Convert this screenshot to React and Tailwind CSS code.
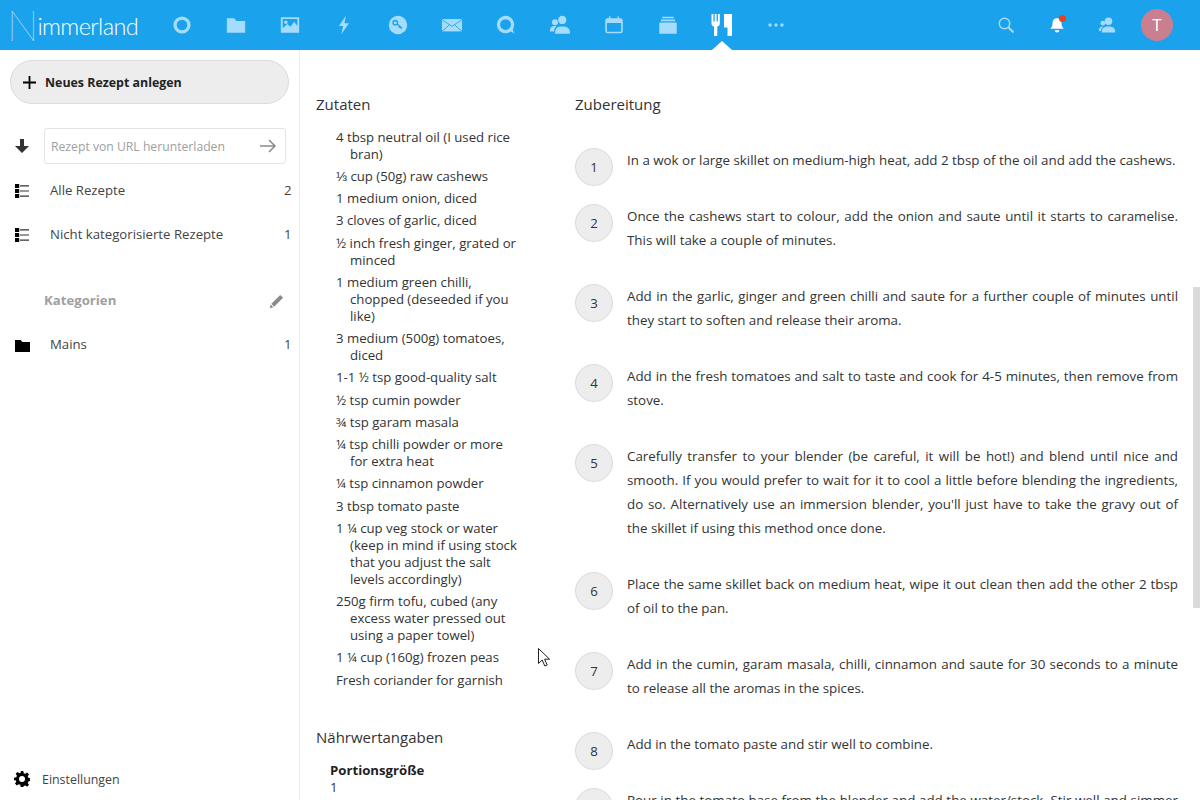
import React from 'react';

const ingredients = [
  '4 tbsp neutral oil (I used rice bran)',
  '⅓ cup (50g) raw cashews',
  '1 medium onion, diced',
  '3 cloves of garlic, diced',
  '½ inch fresh ginger, grated or minced',
  '1 medium green chilli, chopped (deseeded if you like)',
  '3 medium (500g) tomatoes, diced',
  '1-1 ½ tsp good-quality salt',
  '½ tsp cumin powder',
  '¾ tsp garam masala',
  '¼ tsp chilli powder or more for extra heat',
  '¼ tsp cinnamon powder',
  '3 tbsp tomato paste',
  '1 ¼ cup veg stock or water (keep in mind if using stock that you adjust the salt levels accordingly)',
  '250g firm tofu, cubed (any excess water pressed out using a paper towel)',
  '1 ¼ cup (160g) frozen peas',
  'Fresh coriander for garnish',
];

const steps = [
  'In a wok or large skillet on medium-high heat, add 2 tbsp of the oil and add the cashews.',
  'Once the cashews start to colour, add the onion and saute until it starts to caramelise. This will take a couple of minutes.',
  'Add in the garlic, ginger and green chilli and saute for a further couple of minutes until they start to soften and release their aroma.',
  'Add in the fresh tomatoes and salt to taste and cook for 4-5 minutes, then remove from stove.',
  "Carefully transfer to your blender (be careful, it will be hot!) and blend until nice and smooth. If you would prefer to wait for it to cool a little before blending the ingredients, do so. Alternatively use an immersion blender, you'll just have to take the gravy out of the skillet if using this method once done.",
  'Place the same skillet back on medium heat, wipe it out clean then add the other 2 tbsp of oil to the pan.',
  'Add in the cumin, garam masala, chilli, cinnamon and saute for 30 seconds to a minute to release all the aromas in the spices.',
  'Add in the tomato paste and stir well to combine.',
  'Pour in the tomato base from the blender and add the water/stock. Stir well and simmer for a few minutes.',
];

const Svg = ({ children, size = 20, className = '' }) => (
  <svg width={size} height={size} viewBox="0 0 24 24" fill="currentColor" className={className}>
    {children}
  </svg>
);

const navIcons = [
  <Svg key="files" size={22}><circle cx="12" cy="12" r="7.6" fill="none" stroke="currentColor" strokeWidth="3.6" /></Svg>,
  <Svg key="folder" size={22}><path d="M2 4.5h8l2.5 3H22v13H2z" /></Svg>,
  <Svg key="image" size={22}><path fillRule="evenodd" d="M2 3.5h20v17H2zM4 5.5v10l5-4.500 3.500 3 4-5.500 3.500 4.500V5.500zM7.500 7a2 2 0 1 1 0 4 2 2 0 0 1 0-4z" /></Svg>,
  <Svg key="bolt" size={22}><path d="M14 2 6.500 13h4.500L9 22l8.500-12H12.500z" /></Svg>,
  <Svg key="passwords" size={22}>
    <circle cx="12" cy="12" r="10" />
    <circle cx="9" cy="9.500" r="2.400" fill="none" stroke="#1aa2ec" strokeWidth="1.500" />
    <path d="m11 11 5.500 4.500m-2.500-2 -1 1.500m3-.2-1 1.200" fill="none" stroke="#1aa2ec" strokeWidth="1.500" />
  </Svg>,
  <Svg key="mail" size={22}>
    <path d="M1 5.500h22v13.500H1z" />
    <path d="m1 6 11 7.500L23 6M1 19l8.500-7.500M23 19l-8.500-7.500" fill="none" stroke="#1aa2ec" strokeWidth="0.900" />
  </Svg>,
  <Svg key="talk" size={22}>
    <circle cx="11.500" cy="11.500" r="7.700" fill="none" stroke="currentColor" strokeWidth="3.600" />
    <path d="m16 18 5 3.500-2-6z" />
  </Svg>,
  <Svg key="contacts" size={22}>
    <circle cx="14.500" cy="6.500" r="4.500" />
    <path d="M6.500 21.500c0-6.500 2.500-8 8-8s8.500 1.500 8.500 8z" />
    <circle cx="6.500" cy="9" r="3.300" />
    <path d="M1 19c0-4.500 2-6 5.500-6 .8 0 1.500 0 2 .3-2 1-3 2.800-3 5.700z" />
  </Svg>,
  <Svg key="calendar" size={20}>
    <path fillRule="evenodd" d="M4 4H6V1.500h1.600V4h8.800V1.500H18V4h2a2.500 2.500 0 0 1 2.500 2.500v13A2.500 2.500 0 0 1 20 22H4a2.500 2.500 0 0 1-2.500-2.500v-13A2.500 2.500 0 0 1 4 4zM3.500 9.500v10c0 .3.200.5.500.5h16c.3 0 .5-.2.500-.5v-10z" />
  </Svg>,
  <Svg key="deck" size={20}>
    <path d="M5 2h14v2H5zM3.500 5.500h17v2h-17zM2.500 9h19a1 1 0 0 1 1 1v11.500a1 1 0 0 1-1 1h-19a1 1 0 0 1-1-1V10a1 1 0 0 1 1-1z" />
  </Svg>,
  <Svg key="cookbook" size={24} className="text-white">
    <path d="M1.500 1h1.900v7.500h1.300V1h1.900v7.500h1.300V1h1.900v9.500c0 1.600-1 2.700-2.500 3V23H4v-9.500c-1.500-.3-2.500-1.400-2.500-3zM14 1h8v22h-4.500v-8.500H14z" />
  </Svg>,
  <Svg key="more" size={22}><circle cx="5.500" cy="12" r="1.800" /><circle cx="12" cy="12" r="1.800" /><circle cx="18.500" cy="12" r="1.800" /></Svg>,
];

const ListIcon = () => (
  <svg width="16" height="16" viewBox="0 0 16 16" fill="black">
    <path d="M1 1h4.200v4H1zM1 6h4.200v4H1zM1 11h4.200v4H1z" />
    <path d="M6 2.200h9v1.200H6zM6 7.400h9v1.200H6zM6 12.600h9v1.200H6z" fill="#333" />
  </svg>
);

const NavRow = ({ icon, label, count }) => (
  <div className="flex h-[44px] items-center">
    <div className="flex w-[44px] justify-center">{icon}</div>
    <span className="ml-[6px] flex-1 text-[#444]">{label}</span>
    <span className="w-[14px] text-[#444]">{count}</span>
  </div>
);

export default function App() {
  return (
    <div className="flex h-screen flex-col overflow-hidden bg-white font-['Open_Sans',sans-serif] text-[13.2px] text-[#333]">
      <header className="flex h-[50px] shrink-0 items-center bg-[#1aa2ec] text-[#a6dcfb]">
        <div className="flex w-[155px] items-end pl-[7px] text-white">
          <span className="font-['Lato',sans-serif] text-[42px] leading-[46px] font-thin">N</span>
          <span className="-ml-[1px] mb-[8px] font-['Lato',sans-serif] text-[23.500px] leading-[28px] font-light tracking-[-0.6px]">immerland</span>
        </div>
        {navIcons.map((icon, index) => (
          <div key={index} className="relative flex h-[50px] w-[54px] items-center justify-center">
            {icon}
            {index === 10 && (
              <div className="absolute bottom-0 left-[17px] h-0 w-0 border-x-[10px] border-b-[9px] border-x-transparent border-b-white" />
            )}
          </div>
        ))}
        <div className="ml-auto flex items-center pr-[18px]">
          <div className="flex w-[50px] justify-center pr-[2px]">
            <Svg size={18}><circle cx="10" cy="10" r="7" fill="none" stroke="currentColor" strokeWidth="1.800" /><path d="m15 15 7 7" stroke="currentColor" strokeWidth="2.500" /></Svg>
          </div>
          <div className="relative flex w-[50px] justify-center text-white">
            <Svg size={18}><path d="M12 3c4 0 6 3 6 7 0 3 1 5 3 7H3c2-2 3-4 3-7 0-4 2-7 6-7zM9 19h6a3 3 0 0 1-6 0z" /></Svg>
            <div className="absolute top-[-1px] left-[27px] h-[7px] w-[7px] rounded-full bg-[#e9421e]" />
          </div>
          <div className="flex w-[50px] justify-center">
            <Svg size={18}><circle cx="14" cy="7" r="5" /><path d="M5 22c0-6 3-8 9-8s9 2 9 8z" /><circle cx="6.500" cy="9.500" r="3.200" /><path d="M1 20c0-4 2-6 6-6-1 1-3 3-3 6z" /></Svg>
          </div>
          <div className="flex w-[50px] justify-center">
            <div className="flex h-[32px] w-[32px] items-center justify-center rounded-full bg-[#c97f90] text-[17px] text-white">T</div>
          </div>
        </div>
      </header>

      <div className="relative flex min-h-0 flex-1">
        <aside className="flex w-[300px] shrink-0 flex-col border-r border-[#ededed] pr-[1px]">
          <div className="pt-[10px] pr-[9px] pl-[10px]">
            <button className="flex h-[44px] w-full items-center rounded-full border border-[#dbdbdb] bg-[#ededed] pl-[12px] font-bold text-[#222]">
              <svg width="13" height="13" viewBox="0 0 13 13" fill="black"><path d="M5.600 0h1.800v5.600H13v1.800H7.400V13H5.600V7.400H0V5.600h5.600z" /></svg>
              <span className="ml-[9px] pt-[3px] text-[12.400px]">Neues Rezept anlegen</span>
            </button>
          </div>
          <div className="mt-[24px] flex h-[36px] items-center">
            <div className="flex w-[44px] justify-center">
              <svg width="14" height="14" viewBox="0 0 14 14" fill="#333"><path d="M5 0h4v7h5l-7 7-7-7h5z" /></svg>
            </div>
            <div className="flex h-[36px] w-[242px] items-center justify-between rounded-[3px] border border-[#e3e3e3] pr-[8px] pl-[6px] text-[#a0a0a0]">
              <span className="pt-[3px] text-[12.200px]">Rezept von URL herunterladen</span>
              <svg width="18" height="16" viewBox="0 0 18 16" fill="none" stroke="#8c8c8c" strokeWidth="1.500"><path d="M1 8h15M10 2l6 6-6 6" /></svg>
            </div>
          </div>
          <div className="mt-[5px]">
            <NavRow icon={<ListIcon />} label="Alle Rezepte" count="2" />
            <NavRow icon={<ListIcon />} label="Nicht kategorisierte Rezepte" count="1" />
          </div>
          <div className="mt-[22px] flex h-[44px] items-center justify-between pr-[14px] pl-[44px]">
            <span className="font-bold text-[#a0a0a0]">Kategorien</span>
            <svg width="15" height="15" viewBox="0 0 16 16" fill="#8a8a8a"><path d="M12 1l3 3-9.500 9.500-3-3zM1.800 11.300l2.900 2.900L.8 15.200z" /></svg>
          </div>
          <NavRow
            icon={<svg width="15" height="15" viewBox="0 0 15 15" fill="black"><path d="M0 2h5.500l2 2H15v10H0z" /></svg>}
            label="Mains"
            count="1"
          />
          <div className="mt-auto flex h-[44px] items-center pt-[2px] pl-[14px] text-[#444]">
            <svg width="16" height="16" viewBox="0 0 24 24" fill="black">
              <path fillRule="evenodd" d="M10 0h4l.6 3.300 2.300 1 2.800-1.900 2.800 2.800-1.900 2.800 1 2.300 3.400.7v4l-3.400.6-1 2.300 1.900 2.800-2.800 2.800-2.800-1.900-2.300 1L14 24h-4l-.6-3.300-2.300-1-2.800 1.900-2.800-2.800 1.900-2.800-1-2.300L0 14v-4l3.400-.7 1-2.300-1.900-2.800 2.800-2.800 2.800 1.900 2.300-1zM12 7.500a4.500 4.500 0 1 0 0 9 4.500 4.500 0 0 0 0-9z" />
            </svg>
            <span className="ml-[12px] pt-[2px] text-[12.400px]">Einstellungen</span>
          </div>
        </aside>

        <main className="flex min-w-0 flex-1 overflow-hidden pt-[44px] pl-[16px]">
          <div className="w-[229px] shrink-0">
            <h2 className="text-[15px] leading-[20px] text-[#333]">Zutaten</h2>
            <ul className="mt-[14.600px] ml-[20px] flex w-[188px] flex-col gap-[5.250px] leading-[17px]">
              {ingredients.map((item, index) => (
                <li key={index} className="pl-[14px] -indent-[14px]">{item}</li>
              ))}
            </ul>
            <h2 className="mt-[38px] text-[15px] leading-[20px] text-[#333]">Nährwertangaben</h2>
            <div className="mt-[15px] ml-[14px] leading-[17px]">
              <div className="font-bold text-[#222]">Portionsgröße</div>
              <div>1</div>
            </div>
          </div>
          <div className="ml-[30px] w-[603px] shrink-0">
            <h2 className="text-[15px] leading-[20px] text-[#333]">Zubereitung</h2>
            <ol className="mt-[34px] flex flex-col">
              {steps.map((step, index) => (
                <li key={index} className="flex">
                  <div className="flex h-[38px] w-[38px] shrink-0 items-center justify-center rounded-full border border-[#dbdbdb] bg-[#ededed] pt-[1px]">{index + 1}</div>
                  <p className="ml-[14px] flex-1 pb-[32px] text-justify text-[13.350px] leading-[24px]">{step}</p>
                </li>
              ))}
            </ol>
          </div>
        </main>

        <div className="absolute top-[237px] right-0 h-[321px] w-[7px] bg-[#dadada]" />
        <svg className="absolute top-[597px] left-[537px]" width="15" height="21" viewBox="0 0 15 21" fill="white" stroke="#222" strokeWidth="1">
          <path d="M1.500 1.500v15l3.700-3.500 2.600 6 2.400-1-2.600-5.800h5z" />
        </svg>
      </div>
    </div>
  );
}
